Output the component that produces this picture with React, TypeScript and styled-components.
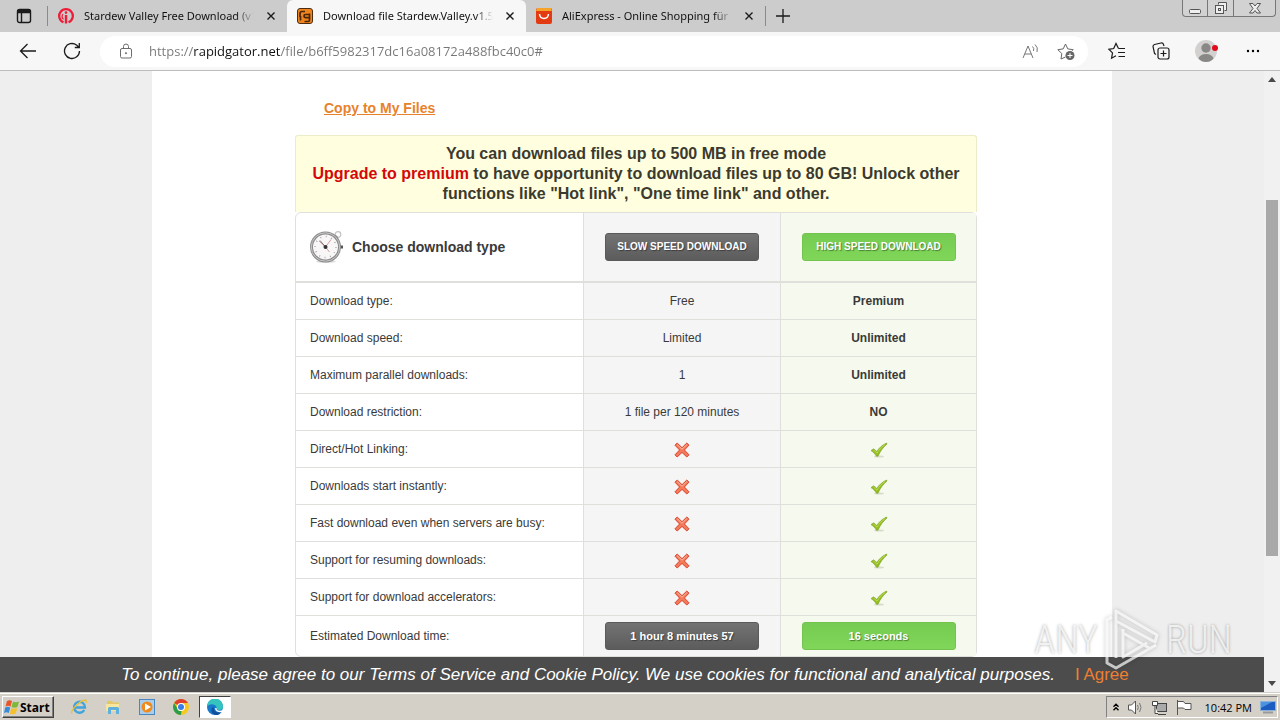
import React from "react";
import styled, { createGlobalStyle, css } from "styled-components";

const Global = createGlobalStyle`
  * { box-sizing: border-box; }
  body { margin: 0; font-family: "Liberation Sans", Arial, sans-serif; color: #3a3a3a; }
  button { font: inherit; color: inherit; border: 0; padding: 0; background: none; cursor: pointer; }
  svg { display: block; flex: none; }
`;

const Screen = styled.div`
  height: 100vh;
  display: flex;
  flex-direction: column;
  overflow: hidden;
  background: #eee;
`;

/* ---------- browser chrome ---------- */

const TabStrip = styled.header`
  display: flex;
  align-items: center;
  flex: none;
  height: 32px;
  background: #ccc;
  font-family: "Noto Sans", "Open Sans", sans-serif;
`;

const IconButton = styled.button<{ $w: number; $color?: string }>`
  flex: none;
  display: flex;
  align-items: center;
  justify-content: center;
  width: ${(p) => p.$w}px;
  color: ${(p) => p.$color ?? "#1b1b1b"};
`;

const Divider = styled.span`
  flex: none;
  width: 1px;
  height: 20px;
  background: #8a8a8a;
`;

const Tab = styled.div<{ $active?: boolean }>`
  display: flex;
  align-items: center;
  gap: 10px;
  flex: 0 1 239px;
  min-width: 0;
  height: 32px;
  padding: 0 9px 0 10px;
  color: #111;
  ${(p) =>
    p.$active &&
    css`
      background: #f7f7f7;
      border-radius: 6px 6px 0 0;
    `}
`;

const TabTitle = styled.span`
  flex: 1;
  min-width: 0;
  overflow: hidden;
  white-space: nowrap;
  font-size: 11px;
  line-height: 16px;
  mask-image: linear-gradient(90deg, #000 calc(100% - 18px), transparent);
`;

const WindowButtons = styled.div`
  display: flex;
  align-self: flex-start;
  margin: 0 4px 0 auto;
  height: 17px;
  border: 1px solid #777;
  border-top: 0;
  border-radius: 0 0 4px 4px;
  background: #d2d2d2;
  button + button { border-left: 1px solid #777; }
`;

const Toolbar = styled.div`
  display: flex;
  align-items: center;
  flex: none;
  height: 39px;
  padding: 0 6px;
  background: #f7f7f7;
  border-bottom: 1px solid #bdbdbd;
`;

const AddressBar = styled.form`
  display: flex;
  align-items: center;
  flex: 1;
  height: 31px;
  margin: 0 7px 0 6px;
  padding: 0 4px 0 18px;
  border-radius: 16px;
  background: #fff;
  color: #6c6c6c;
`;

const AddressInput = styled.input`
  flex: 1;
  min-width: 0;
  height: 24px;
  margin-left: 15px;
  padding: 0;
  border: 0;
  outline: 0;
  font: 13px "Open Sans", "Noto Sans", sans-serif;
  color: transparent;
  caret-color: #111;
  background: linear-gradient(90deg, #777 45px, #111 45px, #111 132px, #777 132px);
  -webkit-background-clip: text;
  background-clip: text;
`;

/* ---------- page ---------- */

const Viewport = styled.div`
  position: relative;
  display: flex;
  flex: 1;
  min-height: 0;
`;

const Document = styled.div`
  display: flex;
  flex-direction: column;
  flex: 1;
  min-width: 0;
`;

const Clip = styled.div`
  flex: 1;
  min-height: 0;
  overflow: hidden;
`;

const Page = styled.main`
  max-width: 960px;
  min-height: 100%;
  margin: 0 auto;
  padding: 28px 135px 0 143px;
  background: #fff;
`;

const CopyLink = styled.a`
  display: block;
  width: max-content;
  margin: 0 0 18px 29px;
  color: #e8822a;
  font-size: 14px;
  font-weight: bold;
  line-height: 18px;
`;

const Notice = styled.p`
  margin: 0;
  padding: 8px 16px;
  border: 1px solid #ececc8;
  border-bottom: 0;
  border-radius: 3px 3px 0 0;
  background: #ffffe0;
  color: #3c3a2e;
  font-size: 16px;
  font-weight: bold;
  line-height: 20px;
  text-align: center;
  a { color: #d40808; text-decoration: none; }
`;

const Plans = styled.table`
  width: 100%;
  table-layout: fixed;
  border: 1px solid #dfe0dc;
  border-radius: 6px;
  border-spacing: 0;
  font-size: 12px;
  line-height: 16px;
  th, td {
    height: 37px;
    padding: 0;
    border-top: 1px solid #dfe0dc;
    text-align: center;
    font-weight: normal;
  }
  th:first-child { padding-left: 14px; text-align: left; }
  th:nth-child(2), td:nth-child(2) { background: #f5f5f5; border-left: 1px solid #dfe0dc; }
  th:nth-child(3), td:nth-child(3) { background: #f6faee; border-left: 1px solid #dfe0dc; font-weight: bold; }
  td svg { margin: 1px auto 0; }
  thead th { height: 68px; border-top: 0; }
  tbody tr:first-child > * { border-top-width: 2px; height: 38px; }
  tbody tr:last-child > * { height: 41px; }
`;

const Choose = styled.div`
  display: flex;
  align-items: center;
  gap: 8px;
  font-size: 14px;
  font-weight: bold;
`;

const PlanButton = styled.button<{ $premium?: boolean; $caps?: boolean }>`
  width: 154px;
  height: 28px;
  border: 1px solid ${(p) => (p.$premium ? "#72c44e" : "#5a5a5a")};
  border-radius: 3px;
  background: ${(p) =>
    p.$premium ? "linear-gradient(#76cc52, #7fd658)" : "linear-gradient(#737373, #5c5c5c)"};
  color: #fff;
  font-size: ${(p) => (p.$caps ? 10 : 11)}px;
  font-weight: bold;
  text-shadow: 1px 1px 1px rgba(0, 0, 0, 0.4);
`;

const CookieBar = styled.aside`
  display: flex;
  align-items: center;
  justify-content: center;
  gap: 20px;
  flex: none;
  height: 35px;
  padding-right: 14px;
  background: #4c4c4c;
  color: #fff;
  font-size: 17px;
  line-height: 20px;
  white-space: nowrap;
  em a { color: inherit; text-decoration: none; }
`;

const Agree = styled.a`
  color: #ee7f32;
  text-decoration: none;
`;

const ScrollBar = styled.div`
  display: flex;
  flex-direction: column;
  align-items: center;
  width: 16px;
  padding: 6px 0;
  background: #f1f1f1;
`;

const Track = styled.div<{ $grow: number; $thumb?: boolean }>`
  flex: ${(p) => p.$grow} 0 0;
  width: 12px;
  background: ${(p) => (p.$thumb ? "#a9a9a9" : "transparent")};
`;

const Watermark = styled.div`
  position: absolute;
  right: 48px;
  bottom: 20px;
  display: flex;
  align-items: center;
  gap: 6px;
  color: rgba(255, 255, 255, 0.75);
  font: 300 38px/44px "Roboto Condensed", "Liberation Sans", sans-serif;
  text-shadow: 0 0 3px rgba(0, 0, 0, 0.35);
  pointer-events: none;
  svg { filter: drop-shadow(0 0 2px rgba(0, 0, 0, 0.3)); }
`;

/* ---------- taskbar ---------- */

const Taskbar = styled.footer`
  display: flex;
  align-items: center;
  flex: none;
  height: 28px;
  padding: 2px 2px 0;
  background: #d4d0c8;
  box-shadow: inset 0 1px #d4d0c8, inset 0 2px #fff;
  color: #000;
`;

const StartButton = styled.button`
  display: flex;
  align-items: center;
  width: 52px;
  height: 22px;
  padding-left: 1px;
  margin-right: 9px;
  border: 1px solid;
  border-color: #fff #404040 #404040 #fff;
  box-shadow: inset -1px -1px #808080;
  font: bold 12px "Open Sans", "Noto Sans", sans-serif;
`;

const TaskButton = styled.button<{ $active?: boolean }>`
  display: flex;
  align-items: center;
  justify-content: center;
  width: 32px;
  height: 22px;
  margin-right: 2px;
  ${(p) =>
    p.$active &&
    css`
      border: 1px solid;
      border-color: #404040 #fff #fff #404040;
      background: #fff;
    `}
`;

const Tray = styled.div`
  display: flex;
  align-items: center;
  height: 22px;
  margin-left: auto;
  padding: 0 1px 0 5px;
  gap: 7px;
  border: 1px solid;
  border-color: #808080 #fff #fff #808080;
  font: 11px "Open Sans", "Noto Sans", sans-serif;
  white-space: nowrap;
  time { margin: 0 1px 0 6px; }
`;

/* ---------- drawings ---------- */

const Line = ({ s = 16, w = 1, children }: { s?: number; w?: number; children: React.ReactNode }) => (
  <svg width={s} height={s} viewBox={`0 0 ${s} ${s}`} fill="none" stroke="currentColor" strokeWidth={w} aria-hidden>
    {children}
  </svg>
);

const CloseIcon = () => (
  <Line s={10} w={1.4}><path d="M1.500 1.500l7 7M8.500 1.500l-7 7" /></Line>
);

const CrossMark = () => (
  <svg width="16" height="16" viewBox="0 0 16 16" role="img" aria-label="No">
    <path d="M3.2 1L8 5.7 12.8 1 15 3.2 10.4 8l4.6 4.8-2.2 2.2L8 10.4 3.2 15 1 12.8 5.6 8 1 3.2z" fill="#f47a5c" stroke="#d8432a" strokeLinejoin="round" />
    <path d="M3.2 2.6L8 7.2l4.8-4.6" fill="none" stroke="#fbb5a0" />
  </svg>
);

const CheckMark = () => (
  <svg width="18" height="16" viewBox="0 0 18 16" role="img" aria-label="Yes">
    <ellipse cx="9" cy="14.6" rx="5" ry="1" fill="#d5dcc8" />
    <path d="M1 8.6l2.6-1.8 3.2 2.6C9.400 5.600 12.400 2.800 16.600 1L17 2C13 5.400 10.200 9.400 8 14.200H6.400C5 11.800 3.400 10 1 8.600z" fill="#93bd1f" stroke="#7a9f2c" strokeWidth=".6" />
    <path d="M3.400 8l3.600 3.200c2.400-4 4.800-6.600 8-8.600" fill="none" stroke="#b9dc4c" strokeWidth="1" />
  </svg>
);

const Stopwatch = () => (
  <svg width="34" height="34" viewBox="0 0 34 34" aria-hidden>
    <circle cx="28" cy="4.500" r="2.800" fill="none" stroke="#c2c2c2" strokeWidth="1.200" />
    <path d="M24 9l3-3" stroke="#999" strokeWidth="3" />
    <path d="M30 17h3" stroke="#555" strokeWidth="3" />
    <ellipse cx="16" cy="31.500" rx="10" ry="1.500" fill="#ddd" />
    <circle cx="15.500" cy="17" r="14" fill="#f8f6f6" stroke="#8b8b8b" strokeWidth="3" />
    <circle cx="15.500" cy="17" r="14.200" fill="none" stroke="#c9c9c9" />
    <circle cx="15.500" cy="17" r="10.500" fill="none" stroke="#999" strokeWidth="1.500" strokeDasharray=".8 4.700" />
    <path d="M9 11l6.500 6L21 9.500M15.500 17l4 5" fill="none" stroke="#d99a9a" />
    <path d="M10 10.500l5.500 6.500" stroke="#777" />
    <circle cx="15.500" cy="17" r="2" fill="#333" />
  </svg>
);

const Caret = ({ down }: { down?: boolean }) => (
  <svg width="8" height="5" viewBox="0 0 8 5" aria-hidden>
    <path d={down ? "M0 0h8L4 5z" : "M0 5h8L4 0z"} fill="#4a4a4a" />
  </svg>
);

const rows: [string, string | null, string | null][] = [
  ["Download type:", "Free", "Premium"],
  ["Download speed:", "Limited", "Unlimited"],
  ["Maximum parallel downloads:", "1", "Unlimited"],
  ["Download restriction:", "1 file per 120 minutes", "NO"],
  ["Direct/Hot Linking:", null, null],
  ["Downloads start instantly:", null, null],
  ["Fast download even when servers are busy:", null, null],
  ["Support for resuming downloads:", null, null],
  ["Support for download accelerators:", null, null],
];

const BrowserTab = ({ title, icon, active }: { title: string; icon: React.ReactNode; active?: boolean }) => (
  <Tab $active={active}>
    {icon}
    <TabTitle>{title}</TabTitle>
    <IconButton $w={14} aria-label={`Close ${title}`}><CloseIcon /></IconButton>
  </Tab>
);

export default function App() {
  return (
    <Screen>
      <Global />
      <TabStrip>
        <IconButton $w={47} aria-label="Tab actions">
          <Line s={16} w={1.400}>
            <rect x="1.500" y="1.500" width="13" height="13" rx="2" />
            <path d="M1.500 3.500h13" strokeWidth="3.500" /><path d="M5.500 4v10" />
          </Line>
        </IconButton>
        <Divider />
        <BrowserTab
          title="Stardew Valley Free Download (v1"
          icon={
            <svg width="16" height="16" viewBox="0 0 16 16" fill="none" stroke="#ee1c38" aria-hidden>
              <path d="M5.500 14.300A6.800 6.800 0 1 1 10.500 14.300" strokeWidth="2.300" />
              <path d="M8 7v8.500" strokeWidth="2.400" />
              <path d="M5.500 11.300A4 4 0 0 1 5 6" strokeWidth="1.200" />
              <circle cx="8" cy="4.600" r="1.300" fill="#ee1c38" stroke="none" />
            </svg>
          }
        />
        <BrowserTab
          active
          title="Download file Stardew.Valley.v1.5"
          icon={
            <svg width="16" height="16" viewBox="0 0 16 16" fill="none" aria-hidden>
              <rect x=".5" y=".5" width="15" height="15" rx="2.500" fill="#ee8420" stroke="#4a2c10" />
              <path d="M3 9V5.500Q3 3.500 5 3.500H8M3.500 12.500V8" stroke="#4a2506" strokeWidth="1.700" />
              <path d="M12.500 6.500H8.500Q7 6.500 7 8t1.500 1.700H12.500M12.500 5.500V12Q12.500 13.500 11 13.500H7.500" stroke="#4a2506" strokeWidth="1.700" />
            </svg>
          }
        />
        <BrowserTab
          title="AliExpress - Online Shopping für"
          icon={
            <svg width="16" height="16" viewBox="0 0 16 16" fill="none" aria-hidden>
              <rect width="16" height="16" rx="2" fill="#e43a12" />
              <path d="M1 0h14l1 3H0z" fill="#f7a228" />
              <path d="M3.500 6q.5 4.500 4.500 4.500T12.500 6" stroke="#fff" strokeWidth="1.500" />
            </svg>
          }
        />
        <Divider />
        <IconButton $w={34} aria-label="New tab"><Line s={14} w={1.300}><path d="M7 0v14M0 7h14" /></Line></IconButton>
        <WindowButtons>
          <IconButton $w={24} $color="#555" aria-label="Minimize"><Line s={14}><rect x="1.500" y="8.500" width="11" height="4" rx="1" fill="#eee" /></Line></IconButton>
          <IconButton $w={26} $color="#555" aria-label="Restore">
            <Line s={14}><path d="M4.500 3.500v-2h8v8h-2" fill="#eee" /><rect x="1.500" y="4.500" width="8" height="8" fill="#eee" /><rect x="4.500" y="7.500" width="2" height="2" /></Line>
          </IconButton>
          <IconButton $w={42} $color="#555" aria-label="Close">
            <Line s={14}><path d="M1.500 2.500h3.500l2 2.500 2-2.500h3.500L9 7.500l3.500 4.500H9L7 9.500 5 12H1.500L5 7.500z" fill="#eee" /></Line>
          </IconButton>
        </WindowButtons>
      </TabStrip>

      <Toolbar>
        <IconButton $w={44} aria-label="Back"><Line s={18} w={1.300}><path d="M17 9H1.500M8.500 2L1.500 9l7 7" /></Line></IconButton>
        <IconButton $w={44} aria-label="Refresh">
          <Line s={18} w={1.300}><path d="M16.500 9a7.500 7.500 0 1 1-3-6l2.500 2.200M16.300 1v4.500h-4.500" /></Line>
        </IconButton>
        <AddressBar onSubmit={(e) => e.preventDefault()}>
          <Line s={16}>
            <rect x="2.500" y="5.500" width="11" height="9.500" rx="1.500" /><path d="M5.500 5.500V3.500a2.500 2.500 0 0 1 5 0v2" /><circle cx="8" cy="10.200" r=".6" fill="currentColor" />
          </Line>
          <AddressInput aria-label="Address" defaultValue="https://rapidgator.net/file/b6ff5982317dc16a08172a488fbc40c0#" />
          <IconButton type="button" $w={36} $color="#777" aria-label="Read aloud">
            <Line s={17}><path d="M1 15L6 3l5 12M2.800 11h6.400M10.500 3.500q2 1.800 1 4.500M13 1.500q3.500 3 2 7.500" /></Line>
          </IconButton>
          <IconButton type="button" $w={36} $color="#666" aria-label="Add to favorites">
            <Line s={18}>
              <path d="M8.500 15l-4.500 2 .8-5.500-4-3.800 5.400-.8L8.500 2l2.300 4.900 5.400.8-1 1" />
              <circle cx="13" cy="13.500" r="4.500" fill="#666" stroke="none" /><path d="M13 11v5M10.500 13.500h5" stroke="#fff" />
            </Line>
          </IconButton>
        </AddressBar>
        <IconButton $w={44} aria-label="Favorites">
          <Line s={18} w={1.200}><path d="M10.500 6.500L8 1.500 5.700 6.500.8 7.300l3.700 3.600-.9 5.300L8 13.700M10.500 6.500H17M10 10.500h7M10.500 14.500H17" /></Line>
        </IconButton>
        <IconButton $w={44} aria-label="Collections">
          <Line s={18} w={1.200}><rect x="6" y="6" width="11" height="11" rx="2" /><path d="M11.500 8.500v6M8.500 11.500h6M4 12.500L2.500 11.500 1 4.500Q1 3 2.500 2.500L9 1q2-.3 2.500 1.500l.5 1.500" /></Line>
        </IconButton>
        <IconButton $w={48} aria-label="Profile">
          <svg width="24" height="22" viewBox="0 0 24 22" aria-hidden>
            <circle cx="11" cy="11" r="11" fill="#d3d1cf" /><circle cx="11" cy="8" r="4.700" fill="#8a8886" />
            <path d="M3.500 18.500Q5 14 11 14t7.500 4.500Q15.500 22 11 22t-7.500-3.500z" fill="#8a8886" /><circle cx="20" cy="8" r="3" fill="#e00b1c" />
          </svg>
        </IconButton>
        <IconButton $w={43} aria-label="Settings and more">
          <svg width="14" height="4" viewBox="0 0 14 4" aria-hidden><circle cx="2" cy="2" r="1.200" /><circle cx="7" cy="2" r="1.200" /><circle cx="12" cy="2" r="1.200" /></svg>
        </IconButton>
      </Toolbar>

      <Viewport>
        <Document>
          <Clip>
            <Page>
              <CopyLink href="#">Copy to My Files</CopyLink>
              <Notice>
                You can download files up to 500 MB in free mode<br />
                <a href="#">Upgrade to premium</a> to have opportunity to download files up to 80 GB! Unlock other
                functions like "Hot link", "One time link" and other.
              </Notice>
              <Plans>
                <colgroup><col /><col width="197" /><col width="196" /></colgroup>
                <thead>
                  <tr>
                    <th scope="col"><Choose><Stopwatch />Choose download type</Choose></th>
                    <th scope="col"><PlanButton $caps>SLOW SPEED DOWNLOAD</PlanButton></th>
                    <th scope="col"><PlanButton $caps $premium>HIGH SPEED DOWNLOAD</PlanButton></th>
                  </tr>
                </thead>
                <tbody>
                  {rows.map(([label, free, premium]) => (
                    <tr key={label}>
                      <th scope="row">{label}</th>
                      <td>{free ?? <CrossMark />}</td>
                      <td>{premium ?? <CheckMark />}</td>
                    </tr>
                  ))}
                  <tr>
                    <th scope="row">Estimated Download time:</th>
                    <td><PlanButton>1 hour 8 minutes 57</PlanButton></td>
                    <td><PlanButton $premium>16 seconds</PlanButton></td>
                  </tr>
                </tbody>
              </Plans>
            </Page>
          </Clip>
          <CookieBar>
            <em>
              To continue, please agree to our <a href="#">Terms of Service</a> and <a href="#">Cookie Policy</a>. We use
              cookies for functional and analytical purposes.
            </em>
            <Agree href="#">I Agree</Agree>
          </CookieBar>
        </Document>
        <ScrollBar>
          <Caret />
          <Track $grow={118} />
          <Track $grow={356} $thumb />
          <Track $grow={125} />
          <Caret down />
        </ScrollBar>
        <Watermark>
          <span>ANY</span>
          <svg width="56" height="64" viewBox="0 0 56 64" fill="none" stroke="#fff" strokeOpacity=".7" strokeWidth="3" strokeLinejoin="round" aria-hidden>
            <path d="M8 9L3 12v43l9 5 40-23M12 50V3l41 24-2 7L12 13M19 25l28 16M19 21v28l24-14" />
          </svg>
          <span>RUN</span>
        </Watermark>
      </Viewport>

      <Taskbar>
        <StartButton>
          <svg width="16" height="16" viewBox="0 0 16 16" aria-hidden>
            <path d="M3 2q2.500-1.500 5 0L6.500 7.500q-2.500-1.500-5 0z" fill="#e8552a" /><path d="M9 2.500q2.500 1.500 6 0L13.500 8Q10 9.500 7.500 8z" fill="#7db83a" />
            <path d="M1.200 8.500q2.500-1.500 5 0L4.800 14q-2.500-1.500-4.800 0z" fill="#3a8ad8" /><path d="M7.200 9q2.500 1.500 6 0L11.800 14.500q-3.500 1.500-6 0z" fill="#f5c02c" />
          </svg>
          Start
        </StartButton>
        <TaskButton aria-label="Internet Explorer">
          <svg width="16" height="16" viewBox="0 0 16 16" fill="none" aria-hidden>
            <path d="M13.300 11A5.500 5.500 0 1 1 14 8.500H4" stroke="#3fa4dc" strokeWidth="2.400" />
            <path d="M1 14.500C-1 12 8 2 14 1q2 0 .8 3" stroke="#e8c13c" strokeWidth="1.300" />
          </svg>
        </TaskButton>
        <TaskButton aria-label="File Explorer">
          <svg width="16" height="16" viewBox="0 0 16 16" aria-hidden>
            <path d="M2 2h5l1 1.500h6V12H2z" fill="#e6c765" /><path d="M1 5h13v7H1z" fill="#f7e6a0" /><path d="M3 15V9.500Q3 8 4.500 8h8Q14 8 14 9.500V15h-3v-4H6v4z" fill="#5fb0dc" />
          </svg>
        </TaskButton>
        <TaskButton aria-label="Media Player">
          <svg width="16" height="16" viewBox="0 0 16 16" aria-hidden>
            <rect x=".5" y=".5" width="15" height="15" fill="#a9cdea" stroke="#4a86c0" /><circle cx="8" cy="8" r="5.500" fill="#f08a1c" /><path d="M6 4.500v7L12 8z" fill="#fff" />
          </svg>
        </TaskButton>
        <TaskButton aria-label="Chrome">
          <svg width="16" height="16" viewBox="0 0 16 16" aria-hidden>
            <circle cx="8" cy="8" r="8" fill="#f7c920" /><path d="M8 8L1.100 4A8 8 0 0 1 15 4H8z" fill="#e0402f" /><path d="M1.100 4L6 12l2.500 0L8 16A8 8 0 0 1 1.100 4z" fill="#2d9d4c" />
            <circle cx="8" cy="8" r="4" fill="#fff" /><circle cx="8" cy="8" r="3" fill="#3a7ce8" />
          </svg>
        </TaskButton>
        <TaskButton $active aria-label="Edge">
          <svg width="16" height="16" viewBox="0 0 16 16" aria-hidden>
            <circle cx="8" cy="8" r="8" fill="#1878cc" /><path d="M0 7.500A8 8 0 0 1 16 7.500q0 3.500-4 3.500-3 0-2.500-1.500Q10 8 8.500 6.500 4 3.500 0 7.500z" fill="#35c3c0" />
            <path d="M6.500 8q0 5 5 5.500 2 .2 3.500-1Q12 17 8 16 3 14 5 9z" fill="#124f9c" /><path d="M9.500 9q-.5 2.500 3 2.800 2 0 3.500-1.500L15 13q-3 .5-5-.5T8 9z" fill="#fff" />
          </svg>
        </TaskButton>
        <Tray>
          <Line s={8} w={1.400}><path d="M1.500 3.800L4 1.300l2.500 2.500M1.500 7.300L4 4.800l2.500 2.500" /></Line>
          <Line s={17}>
            <path d="M1.500 6h3L8.500 2v13l-4-4h-3z" fill="#fff" stroke="#555" /><path d="M10.500 6q1.500 2.500 0 5M12.500 4q3 4.500 0 9" stroke="#777" />
          </Line>
          <Line s={17}>
            <rect x="5.500" y="4.500" width="10" height="8" fill="#aaa" stroke="#444" /><path d="M7 15.500h8" stroke="#444" /><path d="M1.500 2.500h5v4h-5zM4 6.500v8h3" fill="#fff" stroke="#444" />
          </Line>
          <Line s={17}><path d="M2.500 1v15M2.500 2.500h6l1.500 2h6v6H10L8.500 9h-6" fill="#fff" stroke="#555" /></Line>
          <time>10:42 PM</time>
          <svg width="16" height="14" viewBox="0 0 16 14" aria-hidden>
            <rect x=".5" y="1.500" width="15" height="9" fill="#1c5cc0" stroke="#8ab0dc" /><path d="M1 2h11L1 8z" fill="#4d92e0" /><path d="M3 12.500h10" stroke="#9a9a9a" strokeWidth="2" />
          </svg>
        </Tray>
      </Taskbar>
    </Screen>
  );
}
